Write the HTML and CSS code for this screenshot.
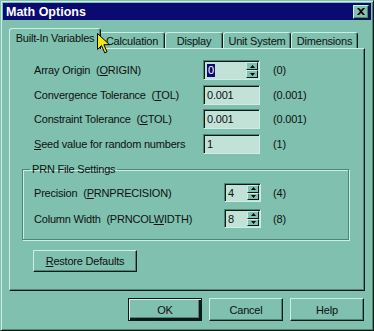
FILE: index.html
```html
<!DOCTYPE html>
<html lang="en">
<head>
  <meta charset="UTF-8">
  <title>Math Options</title>
  <link rel="stylesheet" href="styles.css">
</head>
<body>

  <div class="window">
    <div class="titlebar">
      <span class="title">Math Options</span>
      <span class="close">
        <svg width="8" height="7" viewBox="0 0 8 7"><path d="M0 0h2l2 2 2-2h2L5 3.5 8 7H6L4 5 2 7H0l3-3.5z" fill="#000"/></svg>
      </span>
    </div>

    <div class="tabs">
      <div class="tab active tab-built">Built-In Variables</div>
      <div class="tab tab-calc">Calculation</div>
      <div class="tab tab-display">Display</div>
      <div class="tab tab-unit">Unit System</div>
      <div class="tab tab-dim">Dimensions</div>
    </div>

    <div class="panel">
      <div class="rows">
        <span class="label">Array Origin&nbsp; (<u>O</u>RIGIN)</span>
        <div class="field">
          <span class="value"><span class="sel">0</span></span>
          <span class="spinner">
            <span class="spin-btn"><svg width="5" height="3" viewBox="0 0 5 3"><path d="M2.5 0L5 3H0z" fill="#000"/></svg></span>
            <span class="spin-btn"><svg width="5" height="3" viewBox="0 0 5 3"><path d="M0 0h5L2.5 3z" fill="#000"/></svg></span>
          </span>
        </div>
        <span class="def">(0)</span>

        <span class="label">Convergence Tolerance&nbsp; (<u>T</u>OL)</span>
        <div class="field"><span class="value">0.001</span></div>
        <span class="def">(0.001)</span>

        <span class="label">Constraint Tolerance&nbsp; (<u>C</u>TOL)</span>
        <div class="field"><span class="value">0.001</span></div>
        <span class="def">(0.001)</span>

        <span class="label"><u>S</u>eed value for random numbers</span>
        <div class="field"><span class="value">1</span></div>
        <span class="def">(1)</span>
      </div>

      <fieldset class="group">
        <legend>PRN File Settings</legend>
        <div class="rows rows-prn">
          <span class="label">Precision&nbsp; (<u>P</u>RNPRECISION)</span>
          <div class="field">
            <span class="value">4</span>
            <span class="spinner">
              <span class="spin-btn"><svg width="5" height="3" viewBox="0 0 5 3"><path d="M2.5 0L5 3H0z" fill="#000"/></svg></span>
              <span class="spin-btn"><svg width="5" height="3" viewBox="0 0 5 3"><path d="M0 0h5L2.5 3z" fill="#000"/></svg></span>
            </span>
          </div>
          <span class="def">(4)</span>

          <span class="label">Column Width&nbsp; (PRNCOL<u>W</u>IDTH)</span>
          <div class="field">
            <span class="value">8</span>
            <span class="spinner">
              <span class="spin-btn"><svg width="5" height="3" viewBox="0 0 5 3"><path d="M2.5 0L5 3H0z" fill="#000"/></svg></span>
              <span class="spin-btn"><svg width="5" height="3" viewBox="0 0 5 3"><path d="M0 0h5L2.5 3z" fill="#000"/></svg></span>
            </span>
          </div>
          <span class="def">(8)</span>
        </div>
      </fieldset>

      <div class="btn restore"><u>R</u>estore Defaults</div>
    </div>

    <div class="actions">
      <div class="btn default">OK</div>
      <div class="btn">Cancel</div>
      <div class="btn">Help</div>
    </div>

    <!-- mouse pointer over the tab strip -->
    <svg class="cursor" width="13" height="21" viewBox="0 0 13 21">
      <path d="M0.5 0.5v16l4-4 3.2 7.3 2.3-1-3.1-7.1h5.6z" fill="#f2e61a" stroke="#000" stroke-width="1"/>
    </svg>
  </div>

</body>
</html>
```

FILE: styles.css
```css
:root {
  --face: #7fc0ae;
  --light: #cdeee4;
  --shadow: #4e8577;
  --dark: #0c1a16;
  --field: #c2e2d8;
  --navy: #0a0a72;
}

* {
  box-sizing: border-box;
}

body {
  margin: 0;
  font-family: 'Liberation Sans', Arial, sans-serif;
  font-size: 11px;
  letter-spacing: -0.2px;
  color: #101010;
}

u {
  text-decoration-thickness: 1px;
  text-underline-offset: 1px;
}

.window {
  position: relative;
  width: 374px;
  height: 331px;
  padding: 2px;
  background: var(--face);
  border: 1px solid;
  border-color: var(--face) var(--dark) var(--dark) var(--face);
  box-shadow: inset 1px 1px 0 var(--light), inset -1px -1px 0 var(--shadow);
}

/* TITLE BAR */
.titlebar {
  height: 17px;
  background: var(--navy);
  display: flex;
  align-items: center;
  justify-content: space-between;
  padding: 0 2px 0 3px;
}

.title {
  color: white;
  font-weight: bold;
  font-size: 12.5px;
  letter-spacing: 0;
}

.close {
  width: 16px;
  height: 14px;
  display: flex;
  align-items: center;
  justify-content: center;
  background: var(--face);
  border: 1px solid;
  border-color: var(--light) var(--dark) var(--dark) var(--light);
  box-shadow: inset -1px -1px 0 var(--shadow);
}

/* TABS */
.tabs {
  display: flex;
  align-items: flex-end;
  height: 20px;
  margin-top: 8px;
  padding-left: 8px;
}

.tab {
  height: 16px;
  display: flex;
  align-items: center;
  justify-content: center;
  border: 1px solid;
  border-bottom: none;
  border-color: var(--light) var(--dark) var(--light) var(--light);
  border-radius: 3px 3px 0 0;
  box-shadow: inset -1px 0 0 var(--shadow);
  background: var(--face);
  padding-top: 1px;
}

.tab.active {
  position: relative;
  z-index: 1;
  height: 21px;
  margin: 0 -2px -1px;
  padding-bottom: 3px;
}

.tab-built { width: 88px; }
.tab-built.active { width: 92px; }
.tab-calc { width: 66px; }
.tab-display { width: 58px; }
.tab-unit { width: 68px; }
.tab-dim { width: 67px; }

/* PANEL */
.panel {
  height: 243px;
  margin: 0 6px;
  padding: 11px 12px 0;
  border: 1px solid;
  border-color: var(--light) var(--dark) var(--dark) var(--light);
  box-shadow: inset -1px -1px 0 var(--shadow);
}

.rows {
  display: grid;
  grid-template-columns: 156px 57px auto;
  grid-auto-rows: 20px;
  column-gap: 13px;
  row-gap: 4.7px;
  align-items: center;
  margin-left: 12px;
}

.rows-prn {
  grid-template-columns: 178px 37px auto;
  grid-auto-rows: 19px;
  column-gap: 12px;
  row-gap: 7px;
  margin-left: 0;
}

.label {
  white-space: nowrap;
}

.field {
  height: 100%;
  display: flex;
  align-items: stretch;
  background: var(--field);
  border: 1px solid;
  border-color: var(--shadow) var(--light) var(--light) var(--shadow);
  box-shadow: inset 1px 1px 0 var(--dark);
  padding: 1px 1px 1px 2px;
}

.value {
  flex: 1;
  display: flex;
  align-items: center;
  padding-left: 1px;
}

.sel {
  background: var(--navy);
  color: white;
  padding: 0 1px;
  line-height: 13px;
}

.spinner {
  width: 12px;
  display: flex;
  flex-direction: column;
}

.spin-btn {
  flex: 1;
  display: flex;
  align-items: center;
  justify-content: center;
  background: var(--face);
  border: 1px solid;
  border-color: var(--light) var(--dark) var(--dark) var(--light);
}

.def {
  white-space: nowrap;
}

/* PRN GROUP */
.group {
  width: 327px;
  margin: 9px 0 0;
  padding: 7px 10px 11px 11px;
  border: 1px solid var(--shadow);
  box-shadow: inset 1px 1px 0 var(--light), 1px 1px 0 var(--light);
}

.group legend {
  margin-left: -4px;
  padding: 0 2px;
  line-height: 13px;
}

/* BUTTONS */
.btn {
  width: 74px;
  height: 23px;
  display: flex;
  align-items: center;
  justify-content: center;
  background: var(--face);
  border: 1px solid;
  border-color: var(--light) var(--dark) var(--dark) var(--light);
  box-shadow: inset -1px -1px 0 var(--shadow);
}

.btn.default {
  border: 1px solid var(--dark);
  box-shadow: inset 1px 1px 0 var(--light), inset -2px -2px 0 var(--dark), inset -3px -3px 0 var(--shadow);
}

.restore {
  width: 104px;
  height: 22px;
  margin: 10px 0 0 11px;
}

.actions {
  display: flex;
  justify-content: flex-end;
  gap: 7px;
  margin-top: 7px;
  padding-right: 7px;
}

.cursor {
  position: absolute;
  left: 96px;
  top: 32px;
  z-index: 2;
}
```
